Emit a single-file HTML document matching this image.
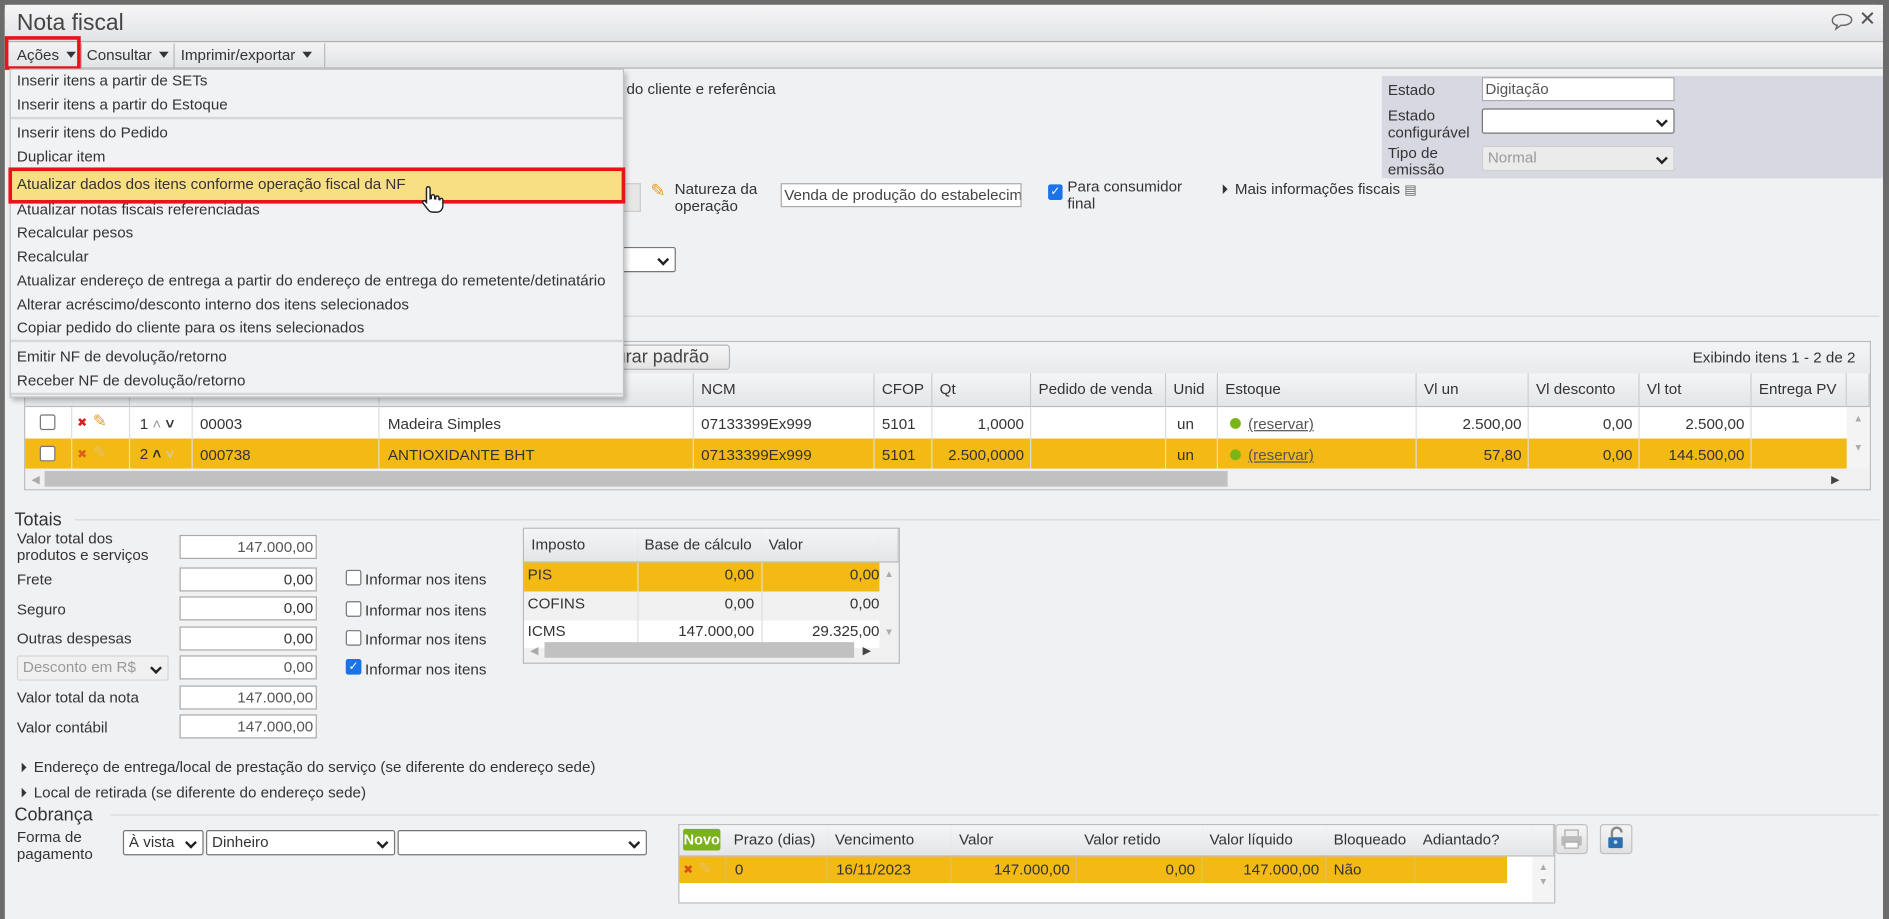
<!DOCTYPE html>
<html><head><meta charset="utf-8"><style>
*{box-sizing:border-box;margin:0;padding:0}
html,body{width:1889px;height:919px;overflow:hidden;background:#5a5a5a}
#w{position:absolute;left:0;top:0;width:1568px;height:763px;transform:scale(1.20472);transform-origin:0 0;font-family:"Liberation Sans","DejaVu Sans",sans-serif;font-size:12.6px;color:#333;background:#f0f1f3}
.a{position:absolute}
.t{position:absolute;white-space:nowrap;line-height:14px}
.in{position:absolute;background:#fff;border:1px solid #a9a9a9;height:20px;font-size:12.6px;line-height:18px;padding:0 2px;text-align:right;white-space:nowrap;overflow:hidden}
.sel{position:absolute;background:#fff;border:1px solid #767676;border-radius:2px;height:21px;font-size:12.6px;line-height:19px;padding:0 4px;white-space:nowrap;overflow:hidden}
.sel:after{content:"";position:absolute;right:6px;top:6px;width:5px;height:5px;border-right:2px solid #222;border-bottom:2px solid #222;transform:rotate(45deg)}
.cb{position:absolute;width:13px;height:13px;border:1px solid #767676;border-radius:2px;background:#fff}
.th{position:absolute;background:linear-gradient(#f4f5f7,#e4e5e8);border-right:1px solid #c9cacd;border-bottom:1px solid #b9babd;padding-left:6px;line-height:27px;white-space:nowrap;overflow:hidden}
.r{text-align:right}
.mi{position:absolute;left:14px;white-space:nowrap;line-height:14px;color:#333}
.tri{display:inline-block;width:0;height:0;border-left:4px solid #333;border-top:4px solid transparent;border-bottom:4px solid transparent;margin-right:6px;vertical-align:0}
.dn{display:inline-block;width:0;height:0;border-top:5px solid #333;border-left:4px solid transparent;border-right:4px solid transparent;margin-left:6px;vertical-align:2px}
.x{color:#d02020;font-size:10px;font-weight:bold}
</style></head><body><div id="w">
<div class="a" style="left:0;top:0;width:1568px;height:4px;background:#6b6b6b"></div>
<div class="a" style="left:0;top:0;width:4px;height:763px;background:#6b6b6b"></div>
<div class="a" style="left:1563px;top:0;width:5px;height:763px;background:#6b6b6b"></div>
<div class="a" style="left:4px;top:4px;width:1559px;height:30px;background:linear-gradient(#f6f6f7,#e2e3e6);border-radius:4px 4px 0 0"></div>
<div class="t" style="left:14px;top:9px;font-size:19px;line-height:22px;color:#444">Nota fiscal</div>
<svg class="a" style="left:1519px;top:10px" width="20" height="16" viewBox="0 0 20 16"><path d="M10 2C5 2 2 4 2 7c0 2 1.5 3.5 4 4l-1 3 4-3h1c5 0 8-2 8-4.5S15 2 10 2z" fill="none" stroke="#666" stroke-width="1.2"/></svg>
<div class="t" style="left:1543px;top:9px;font-size:17px;font-weight:bold;color:#555">✕</div>
<div class="a" style="left:4px;top:34px;width:1559px;height:23px;background:linear-gradient(#f3f3f4,#e2e3e6);border-top:1px solid #b0b0b0;border-bottom:1px solid #b0b0b0"></div>
<div class="t" style="left:14px;top:39px">Ações<span class="dn"></span></div>
<div class="a" style="left:67px;top:36px;width:1px;height:20px;background:#b9b9b9"></div>
<div class="t" style="left:72px;top:39px">Consultar<span class="dn"></span></div>
<div class="a" style="left:144px;top:36px;width:1px;height:20px;background:#b9b9b9"></div>
<div class="t" style="left:150px;top:39px">Imprimir/exportar<span class="dn"></span></div>
<div class="a" style="left:269px;top:36px;width:1px;height:20px;background:#b9b9b9"></div>
<div class="a" style="left:4px;top:30px;width:63px;height:28px;border:3px solid #e8141b"></div>

<div class="t" style="left:520px;top:67px">do cliente e referência</div>
<div class="a" style="left:1147px;top:63px;width:416px;height:85px;background:#d8d8e2"></div>
<div class="t" style="left:1152px;top:68px">Estado</div>
<div class="in" style="left:1230px;top:64px;width:160px;text-align:left;color:#555">Digitação</div>
<div class="t" style="left:1152px;top:89px;line-height:14px">Estado<br>configurável</div>
<div class="sel" style="left:1230px;top:90px;width:160px"></div>
<div class="t" style="left:1152px;top:120px;line-height:14px">Tipo de<br>emissão</div>
<div class="sel" style="left:1230px;top:121px;width:160px;background:#ebebeb;border-color:#d0d0d0;color:#999">Normal</div>
<div class="a" style="left:517px;top:152px;width:15px;height:24px;background:#e6e6e6;border:1px solid #ccc"></div>
<div class="t" style="left:540px;top:152px;font-size:15px;color:#e2a020">✎</div>
<div class="t" style="left:560px;top:150px">Natureza da<br>operação</div>
<div class="in" style="left:648px;top:152px;width:200px;text-align:left;color:#444">Venda de produção do estabelecime</div>
<div class="a" style="left:870px;top:153px;width:12px;height:13px;background:#1a73e8;border-radius:2px;color:#fff;font-size:10px;line-height:13px;text-align:center">✓</div>
<div class="t" style="left:886px;top:148px">Para consumidor<br>final</div>
<div class="t" style="left:1015px;top:150px"><span class="tri"></span>Mais informações fiscais <span style="font-size:11px;color:#666">▤</span></div>
<div class="sel" style="left:515px;top:205px;width:46px"></div>
<div class="a" style="left:517px;top:262px;width:1043px;height:1px;background:#d8d8d8"></div>

<div class="a" style="left:20px;top:283px;width:1533px;height:124px;border:1px solid #b9babd;background:#f3f3f4"></div>
<div class="a" style="left:21px;top:284px;width:1531px;height:26px;background:linear-gradient(#f4f5f6,#e9eaec)"></div>
<div class="a" style="left:500px;top:286px;width:106px;height:21px;border:1px solid #b5b5b5;border-radius:3px;background:linear-gradient(#f7f7f7,#e3e3e3);font-size:15px;line-height:19px;padding-left:10px;color:#444">urar padrão</div>
<div class="t" style="left:1405px;top:290px">Exibindo itens 1 - 2 de 2</div>
<div class="th" style="left:21px;top:310px;width:40px;height:28px"></div>
<div class="th" style="left:60px;top:310px;width:48px;height:28px"></div>
<div class="th" style="left:108px;top:310px;width:52px;height:28px"></div>
<div class="th" style="left:160px;top:310px;width:155px;height:28px"></div>
<div class="th" style="left:315px;top:310px;width:261px;height:28px"></div>
<div class="th" style="left:576px;top:310px;width:150px;height:28px">NCM</div>
<div class="th" style="left:726px;top:310px;width:48px;height:28px">CFOP</div>
<div class="th" style="left:774px;top:310px;width:82px;height:28px">Qt</div>
<div class="th" style="left:856px;top:310px;width:112px;height:28px">Pedido de venda</div>
<div class="th" style="left:968px;top:310px;width:43px;height:28px">Unid</div>
<div class="th" style="left:1011px;top:310px;width:165px;height:28px">Estoque</div>
<div class="th" style="left:1176px;top:310px;width:93px;height:28px">Vl un</div>
<div class="th" style="left:1269px;top:310px;width:92px;height:28px">Vl desconto</div>
<div class="th" style="left:1361px;top:310px;width:93px;height:28px">Vl tot</div>
<div class="th" style="left:1454px;top:310px;width:79px;height:28px">Entrega PV</div>
<div class="th" style="left:1533px;top:310px;width:19px;height:28px"></div>
<div class="a" style="left:21px;top:338px;width:1512px;height:26px;background:#fff"></div>
<div class="a" style="left:21px;top:364px;width:1512px;height:25px;background:#f3b914"></div>
<div class="a" style="left:1533px;top:338px;width:19px;height:51px;background:#f4f4f4;color:#aaa;font-size:8px;text-align:center;line-height:12px;padding-top:4px">▲<br><br>▼</div>
<div class="cb" style="left:33px;top:344px"></div><div class="cb" style="left:33px;top:370px"></div>
<div class="t x" style="left:64px;top:345px">✖</div><div class="t" style="left:77px;top:342px;color:#e2a020;font-size:14px">✎</div>
<div class="t x" style="left:64px;top:371px;opacity:.6">✖</div><div class="t" style="left:77px;top:368px;color:#e8c070;font-size:14px">✎</div>
<div class="t" style="left:116px;top:345px">1 <span style="color:#999">˄</span> <b>˅</b></div>
<div class="t" style="left:116px;top:370px">2 <b>˄</b> <span style="color:#ccc">˅</span></div>
<div class="t" style="left:166px;top:345px">00003</div><div class="t" style="left:166px;top:371px">000738</div>
<div class="t" style="left:322px;top:345px">Madeira Simples</div><div class="t" style="left:322px;top:371px">ANTIOXIDANTE BHT</div>
<div class="t" style="left:582px;top:345px">07133399Ex999</div><div class="t" style="left:582px;top:371px">07133399Ex999</div>
<div class="t" style="left:732px;top:345px">5101</div><div class="t" style="left:732px;top:371px">5101</div>
<div class="t r" style="left:774px;top:345px;width:76px">1,0000</div><div class="t r" style="left:774px;top:371px;width:76px">2.500,0000</div>
<div class="t" style="left:977px;top:345px">un</div><div class="t" style="left:977px;top:371px">un</div>
<div class="t" style="left:1021px;top:345px"><span style="display:inline-block;width:9px;height:9px;border-radius:5px;background:#7cb518;margin-right:6px"></span><u style="color:#555">(reservar)</u></div>
<div class="t" style="left:1021px;top:371px"><span style="display:inline-block;width:9px;height:9px;border-radius:5px;background:#7cb518;margin-right:6px"></span><u style="color:#555">(reservar)</u></div>
<div class="t r" style="left:1176px;top:345px;width:87px">2.500,00</div><div class="t r" style="left:1176px;top:371px;width:87px">57,80</div>
<div class="t r" style="left:1269px;top:345px;width:86px">0,00</div><div class="t r" style="left:1269px;top:371px;width:86px">0,00</div>
<div class="t r" style="left:1361px;top:345px;width:87px">2.500,00</div><div class="t r" style="left:1361px;top:371px;width:87px">144.500,00</div>
<div class="a" style="left:59px;top:338px;width:1px;height:51px;background:#ddd"></div>
<div class="a" style="left:107px;top:338px;width:1px;height:51px;background:#ddd"></div>
<div class="a" style="left:159px;top:338px;width:1px;height:51px;background:#ddd"></div>
<div class="a" style="left:314px;top:338px;width:1px;height:51px;background:#ddd"></div>
<div class="a" style="left:575px;top:338px;width:1px;height:51px;background:#ddd"></div>
<div class="a" style="left:725px;top:338px;width:1px;height:51px;background:#ddd"></div>
<div class="a" style="left:773px;top:338px;width:1px;height:51px;background:#ddd"></div>
<div class="a" style="left:855px;top:338px;width:1px;height:51px;background:#ddd"></div>
<div class="a" style="left:967px;top:338px;width:1px;height:51px;background:#ddd"></div>
<div class="a" style="left:1010px;top:338px;width:1px;height:51px;background:#ddd"></div>
<div class="a" style="left:1175px;top:338px;width:1px;height:51px;background:#ddd"></div>
<div class="a" style="left:1268px;top:338px;width:1px;height:51px;background:#ddd"></div>
<div class="a" style="left:1360px;top:338px;width:1px;height:51px;background:#ddd"></div>
<div class="a" style="left:1453px;top:338px;width:1px;height:51px;background:#ddd"></div>
<div class="a" style="left:21px;top:389px;width:1531px;height:17px;background:#f0f0f0"></div>
<div class="a" style="left:37px;top:391px;width:982px;height:13px;background:#c1c1c1"></div>
<div class="t" style="left:26px;top:391px;color:#aaa;font-size:9px">◀</div>
<div class="t" style="left:1520px;top:391px;color:#444;font-size:9px">▶</div>

<div class="a" style="left:8px;top:57px;width:510px;height:273px;background:#f1f2f4;border:1px solid #c3c3c6;box-shadow:2px 3px 4px rgba(0,0,0,.25)"></div>
<div class="mi" style="top:60px">Inserir itens a partir de SETs</div>
<div class="mi" style="top:80px">Inserir itens a partir do Estoque</div>
<div class="a" style="left:9px;top:97px;width:508px;height:2px;background:#d6d7da"></div>
<div class="mi" style="top:103px">Inserir itens do Pedido</div>
<div class="mi" style="top:123px">Duplicar item</div>
<div class="a" style="left:9px;top:141px;width:508px;height:26px;background:#f9df84"></div>
<div class="a" style="left:7px;top:139px;width:512px;height:30px;border:3px solid #e8141b"></div>
<div class="mi" style="top:146px">Atualizar dados dos itens conforme operação fiscal da NF</div>
<svg class="a" style="left:349px;top:154px" width="20" height="24" viewBox="0 0 20 24"><path d="M5 2.5a1.5 1.5 0 0 1 3 0V11l1-.2V9a1.4 1.4 0 0 1 2.8 0v2l.8.1v-1a1.4 1.4 0 0 1 2.8 0v1.5l.6.2a1.3 1.3 0 0 1 2.6.3v4.5c0 3-2 5.5-5 5.5H10c-2 0-3-1-4-2.5L2 14.5c-.8-1.2.8-2.6 2-1.5l1 1z" fill="#fff" stroke="#222" stroke-width="1.2"/></svg>
<div class="mi" style="top:167px">Atualizar notas fiscais referenciadas</div>
<div class="mi" style="top:186px">Recalcular pesos</div>
<div class="mi" style="top:206px">Recalcular</div>
<div class="mi" style="top:226px">Atualizar endereço de entrega a partir do endereço de entrega do remetente/detinatário</div>
<div class="mi" style="top:246px">Alterar acréscimo/desconto interno dos itens selecionados</div>
<div class="mi" style="top:265px">Copiar pedido do cliente para os itens selecionados</div>
<div class="a" style="left:9px;top:282px;width:508px;height:2px;background:#d6d7da"></div>
<div class="mi" style="top:289px">Emitir NF de devolução/retorno</div>
<div class="mi" style="top:309px">Receber NF de devolução/retorno</div>
<div class="a" style="left:9px;top:326px;width:508px;height:2px;background:#d6d7da"></div>

<div class="t" style="left:12px;top:423px;font-size:15px;line-height:17px">Totais</div>
<div class="a" style="left:62px;top:431px;width:1498px;height:1px;background:#d8d8d8"></div>
<div class="t" style="left:14px;top:440px">Valor total dos<br>produtos e serviços</div>
<div class="in" style="left:149px;top:444px;width:114px;color:#555">147.000,00</div>
<div class="t" style="left:14px;top:474px">Frete</div><div class="in" style="left:149px;top:471px;width:114px">0,00</div>
<div class="t" style="left:14px;top:499px">Seguro</div><div class="in" style="left:149px;top:495px;width:114px">0,00</div>
<div class="t" style="left:14px;top:523px">Outras despesas</div><div class="in" style="left:149px;top:520px;width:114px">0,00</div>
<div class="sel" style="left:14px;top:544px;width:126px;background:#f0f0f0;border-color:#d5d5d5;color:#999">Desconto em R$</div>
<div class="in" style="left:149px;top:544px;width:114px;color:#555">0,00</div>
<div class="t" style="left:14px;top:572px">Valor total da nota</div><div class="in" style="left:149px;top:569px;width:114px;color:#555">147.000,00</div>
<div class="t" style="left:14px;top:597px">Valor contábil</div><div class="in" style="left:149px;top:593px;width:114px;color:#555">147.000,00</div>
<div class="cb" style="left:287px;top:473px"></div><div class="t" style="left:303px;top:474px">Informar nos itens</div>
<div class="cb" style="left:287px;top:499px"></div><div class="t" style="left:303px;top:500px">Informar nos itens</div>
<div class="cb" style="left:287px;top:523px"></div><div class="t" style="left:303px;top:524px">Informar nos itens</div>
<div class="a" style="left:287px;top:547px;width:13px;height:13px;background:#1a73e8;border-radius:2px;color:#fff;font-size:10px;line-height:13px;text-align:center">✓</div><div class="t" style="left:303px;top:549px">Informar nos itens</div>
<div class="a" style="left:434px;top:438px;width:313px;height:113px;border:1px solid #b9babd;background:#f0f0f0"></div>
<div class="th" style="left:435px;top:439px;width:95px;height:28px">Imposto</div>
<div class="th" style="left:529px;top:439px;width:104px;height:28px">Base de cálculo</div>
<div class="th" style="left:632px;top:439px;width:99px;height:28px">Valor</div>
<div class="th" style="left:730px;top:439px;width:16px;height:28px"></div>
<div class="a" style="left:435px;top:467px;width:295px;height:24px;background:#f3b914"></div>
<div class="a" style="left:435px;top:491px;width:295px;height:24px;background:#f1f1f1"></div>
<div class="a" style="left:435px;top:515px;width:295px;height:23px;background:#fff"></div>
<div class="a" style="left:529px;top:467px;width:1px;height:71px;background:#ddd"></div>
<div class="a" style="left:632px;top:467px;width:1px;height:71px;background:#ddd"></div>
<div class="t" style="left:438px;top:470px">PIS</div><div class="t r" style="left:530px;top:470px;width:96px">0,00</div><div class="t r" style="left:633px;top:470px;width:97px">0,00</div>
<div class="t" style="left:438px;top:494px">COFINS</div><div class="t r" style="left:530px;top:494px;width:96px">0,00</div><div class="t r" style="left:633px;top:494px;width:97px">0,00</div>
<div class="t" style="left:438px;top:517px">ICMS</div><div class="t r" style="left:530px;top:517px;width:96px">147.000,00</div><div class="t r" style="left:633px;top:517px;width:97px">29.325,00</div>
<div class="t" style="left:734px;top:470px;color:#aaa;font-size:8px">▲</div><div class="t" style="left:734px;top:518px;color:#aaa;font-size:8px">▼</div>
<div class="a" style="left:452px;top:533px;width:257px;height:13px;background:#c1c1c1"></div>
<div class="t" style="left:440px;top:533px;color:#aaa;font-size:9px">◀</div><div class="t" style="left:716px;top:533px;color:#444;font-size:9px">▶</div>

<div class="t" style="left:18px;top:630px"><span class="tri"></span>Endereço de entrega/local de prestação do serviço (se diferente do endereço sede)</div>
<div class="t" style="left:18px;top:651px"><span class="tri"></span>Local de retirada (se diferente do endereço sede)</div>
<div class="t" style="left:12px;top:668px;font-size:15px;line-height:17px">Cobrança</div>
<div class="a" style="left:92px;top:676px;width:1468px;height:1px;background:#d8d8d8"></div>
<div class="t" style="left:14px;top:688px">Forma de<br>pagamento</div>
<div class="sel" style="left:102px;top:689px;width:67px">À vista</div>
<div class="sel" style="left:171px;top:689px;width:157px">Dinheiro</div>
<div class="sel" style="left:330px;top:689px;width:207px"></div>
<div class="a" style="left:563px;top:684px;width:728px;height:66px;border:1px solid #b9babd;background:#fff"></div>
<div class="th" style="left:564px;top:685px;width:40px;height:26px"></div>
<div class="a" style="left:567px;top:688px;width:31px;height:18px;background:#7ab317;border-radius:2px;color:#fff;font-weight:bold;font-size:12px;line-height:18px;text-align:center">Novo</div>
<div class="th" style="left:603px;top:685px;width:85px;height:26px;line-height:25px">Prazo (dias)</div>
<div class="th" style="left:687px;top:685px;width:104px;height:26px;line-height:25px">Vencimento</div>
<div class="th" style="left:790px;top:685px;width:105px;height:26px;line-height:25px">Valor</div>
<div class="th" style="left:894px;top:685px;width:105px;height:26px;line-height:25px">Valor retido</div>
<div class="th" style="left:998px;top:685px;width:104px;height:26px;line-height:25px">Valor líquido</div>
<div class="th" style="left:1101px;top:685px;width:75px;height:26px;line-height:25px">Bloqueado</div>
<div class="th" style="left:1175px;top:685px;width:98px;height:26px;line-height:25px">Adiantado?</div>
<div class="th" style="left:1272px;top:685px;width:18px;height:26px"></div>
<div class="a" style="left:564px;top:711px;width:687px;height:22px;background:#f3b914"></div>
<div class="a" style="left:1272px;top:711px;width:18px;height:38px;background:#f4f4f4;color:#aaa;font-size:8px;text-align:center;line-height:12px;padding-top:3px">▲<br>▼</div>
<div class="t x" style="left:567px;top:716px;opacity:.7">✖</div><div class="t" style="left:580px;top:714px;color:#e8c070;font-size:13px">✎</div>
<div class="t" style="left:610px;top:715px">0</div>
<div class="t" style="left:694px;top:715px">16/11/2023</div>
<div class="t r" style="left:790px;top:715px;width:98px">147.000,00</div>
<div class="t r" style="left:894px;top:715px;width:98px">0,00</div>
<div class="t r" style="left:998px;top:715px;width:97px">147.000,00</div>
<div class="t" style="left:1107px;top:715px">Não</div>
<div class="a" style="left:602px;top:711px;width:1px;height:22px;background:#e0c060"></div>
<div class="a" style="left:686px;top:711px;width:1px;height:22px;background:#e0c060"></div>
<div class="a" style="left:789px;top:711px;width:1px;height:22px;background:#e0c060"></div>
<div class="a" style="left:893px;top:711px;width:1px;height:22px;background:#e0c060"></div>
<div class="a" style="left:997px;top:711px;width:1px;height:22px;background:#e0c060"></div>
<div class="a" style="left:1100px;top:711px;width:1px;height:22px;background:#e0c060"></div>
<div class="a" style="left:1174px;top:711px;width:1px;height:22px;background:#e0c060"></div>
<div class="a" style="left:1291px;top:684px;width:27px;height:25px;border:1px solid #c0c0c0;border-radius:3px;background:linear-gradient(#f5f5f5,#e0e0e0)"><svg width="25" height="23" viewBox="0 0 25 23"><rect x="7" y="4" width="11" height="6" fill="#eee" stroke="#aaa"/><rect x="4" y="9" width="17" height="8" rx="1" fill="#bbb"/><rect x="7" y="14" width="11" height="5" fill="#fafafa" stroke="#aaa"/></svg></div>
<div class="a" style="left:1328px;top:684px;width:27px;height:25px;border:1px solid #c0c0c0;border-radius:3px;background:linear-gradient(#f5f5f5,#e0e0e0)"><svg width="25" height="23" viewBox="0 0 25 23"><path d="M9 10V6a4 4 0 0 1 8 0" fill="none" stroke="#888" stroke-width="2"/><rect x="6" y="10" width="12" height="9" rx="1" fill="#2a6fb0"/><circle cx="12" cy="14" r="1.5" fill="#cde"/></svg></div>
</div></body></html>
